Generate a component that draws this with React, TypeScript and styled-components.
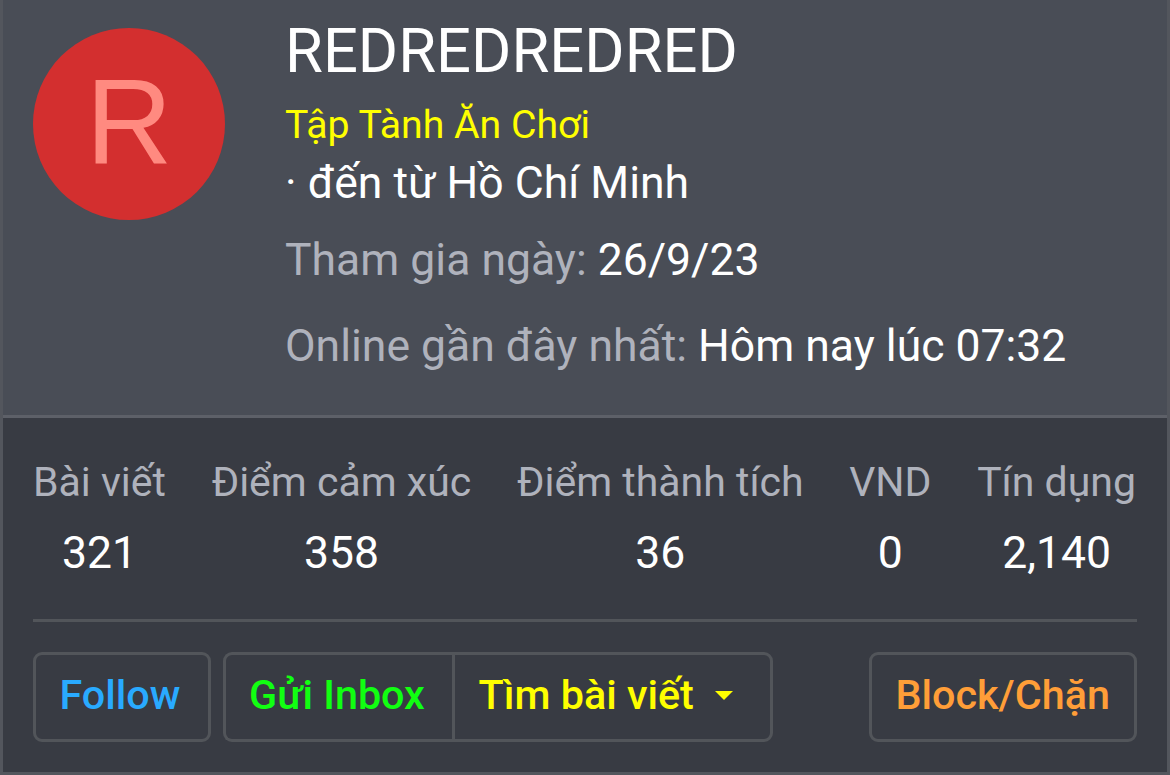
import React from 'react';
import styled, { createGlobalStyle } from 'styled-components';

const GlobalStyle = createGlobalStyle`
  * {
    box-sizing: border-box;
  }

  body {
    margin: 0;
    background: #383b43;
    font-family: Roboto, 'Noto Sans', sans-serif;
    overflow: hidden;
  }
`;

const Card = styled.div`
  width: 1170px;
  height: 775px;
  border: 3px solid #53565d;
  border-top: 0;
  background: #383b43;
  color: #fff;
`;

const Header = styled.header`
  display: flex;
  height: 418px;
  padding: 28px 30px 0;
  border-bottom: 3px solid #5d6068;
  background: #494d56;
`;

const Avatar = styled.div`
  flex: none;
  width: 192px;
  height: 192px;
  margin-right: 60px;
  border-radius: 50%;
  background: #d32f2f;
  color: #ff8a80;
  font-family: 'Liberation Sans', Arial, sans-serif;
  font-size: 120px;
  line-height: 188px;
  text-align: center;
`;

const Info = styled.div`
  white-space: nowrap;
`;

const Name = styled.h4`
  margin: -19px 0 0;
  font-size: 61.5px;
  font-weight: 400;
  line-height: 84px;
`;

const Title = styled.div`
  margin-top: 3px;
  color: #ffff00;
  font-size: 39.2px;
  line-height: 58px;
`;

const Line = styled.div<{ $gap?: number }>`
  margin-top: ${(props) => props.$gap || 0}px;
  font-size: 44.5px;
  line-height: 64px;
`;

const Muted = styled.span`
  color: #afb2bc;
`;

const Stats = styled.div`
  display: flex;
  justify-content: space-between;
  height: 204px;
  margin: 0 30px;
  padding: 32px 1px 0 0;
  border-bottom: 3px solid #52555a;
`;

const Stat = styled.dl`
  margin: 0;
  font-size: 44.5px;
  line-height: 64px;
  text-align: center;
  white-space: nowrap;
`;

const StatLabel = styled.dt`
  color: #afb2bc;
  font-size: 41px;
`;

const StatValue = styled.dd`
  margin: 7px 0 0;
`;

const Actions = styled.div`
  display: flex;
  justify-content: space-between;
  padding: 30px 30px 0;
`;

const Group = styled.div`
  display: flex;
`;

const Button = styled.button<{ $color: string; $width: number }>`
  display: flex;
  align-items: center;
  width: ${(props) => props.$width}px;
  height: 90px;
  padding: 0 0 4px 23.5px;
  border: 3px solid #52555a;
  border-radius: 9px;
  background: transparent;
  color: ${(props) => props.$color};
  font-family: inherit;
  font-size: 41.3px;
  font-weight: 500;
  white-space: nowrap;
`;

const InboxButton = styled(Button)`
  margin-left: 12px;
  padding-left: 23px;
  border-right: 0;
  border-radius: 9px 0 0 9px;
`;

const SearchButton = styled(Button)`
  border-radius: 0 9px 9px 0;
`;

const Caret = styled.span`
  margin-left: 21px;
  border: 9px solid transparent;
  border-top-color: #ffff00;
  border-bottom: 0;
`;

const stats = [
  { label: 'Bài viết', value: '321' },
  { label: 'Điểm cảm xúc', value: '358' },
  { label: 'Điểm thành tích', value: '36' },
  { label: 'VND', value: '0' },
  { label: 'Tín dụng', value: '2,140' },
];

const App = () => {
  return (
    <>
      <GlobalStyle />
      <Card>
        <Header>
          <Avatar>R</Avatar>
          <Info>
            <Name>REDREDREDRED</Name>
            <Title>Tập Tành Ăn Chơi</Title>
            <Line $gap={-3}>· đến từ Hồ Chí Minh</Line>
            <Line $gap={13}>
              <Muted>Tham gia ngày:</Muted> 26/9/23
            </Line>
            <Line $gap={22}>
              <Muted>Online gần đây nhất:</Muted> Hôm nay lúc 07:32
            </Line>
          </Info>
        </Header>
        <Stats>
          {stats.map((stat) => (
            <Stat key={stat.label}>
              <StatLabel>{stat.label}</StatLabel>
              <StatValue>{stat.value}</StatValue>
            </Stat>
          ))}
        </Stats>
        <Actions>
          <Group>
            <Button $color="#29aaff" $width={178}>
              Follow
            </Button>
            <InboxButton $color="#11ff11" $width={229}>
              Gửi Inbox
            </InboxButton>
            <SearchButton $color="#ffff00" $width={321}>
              Tìm bài viết
              <Caret />
            </SearchButton>
          </Group>
          <Button $color="#ff9e38" $width={268}>
            Block/Chặn
          </Button>
        </Actions>
      </Card>
    </>
  );
};

export default App;
